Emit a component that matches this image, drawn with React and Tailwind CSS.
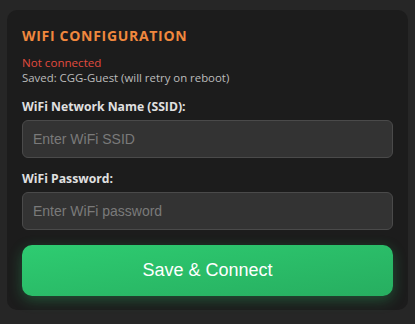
import React, { useState } from 'react';

const Field = ({ label, placeholder, type = 'text', value, onChange }) => (
  <div className="flex flex-col">
    <label className="text-[12.2px] font-bold text-[#e0e0e0] leading-[16px] mb-[5px]">{label}</label>
    <input
      type={type}
      value={value}
      onChange={(e) => onChange(e.target.value)}
      placeholder={placeholder}
      className="h-[38px] w-full rounded-[6px] border border-[#4a4a4a] bg-[#333333] px-[10px] text-[14px] text-[#ddd] placeholder:text-[#7a7a7a] outline-none"
      style={{ fontFamily: '"Liberation Sans", Arial, sans-serif' }}
    />
  </div>
);

const App = () => {
  const [ssid, setSsid] = useState('');
  const [password, setPassword] = useState('');

  return (
    <div
      className="min-h-screen bg-[#262626] pt-[10px] px-[7px] pb-[10px]"
      style={{ fontFamily: '"Open Sans", "Noto Sans", sans-serif' }}
    >
      <div className="rounded-[10px] bg-[#1c1c1c] px-[15px] pt-[17px] pb-[14px]">
        <h2 className="text-[14px] font-bold tracking-[0.7px] text-[#f0883e] leading-[18px]">WIFI CONFIGURATION</h2>
        <div className="mt-[10px] text-[11.6px] leading-[15px]">
          <div className="text-[#e04b3f]">Not connected</div>
          <div className="text-[11.4px] text-[#bdbdbd]">Saved: CGG-Guest (will retry on reboot)</div>
        </div>
        <div className="mt-[14px] flex flex-col gap-[13px]">
          <Field label="WiFi Network Name (SSID):" placeholder="Enter WiFi SSID" value={ssid} onChange={setSsid} />
          <Field label="WiFi Password:" placeholder="Enter WiFi password" type="password" value={password} onChange={setPassword} />
        </div>
        <button
          className="mt-[15px] h-[51px] w-full rounded-[10px] bg-gradient-to-br from-[#2ecc71] to-[#27ae60] text-[18px] text-white shadow-[0_4px_14px_rgba(46,204,113,0.3)]"
          style={{ fontFamily: '"Liberation Sans", Arial, sans-serif' }}
        >
          Save &amp; Connect
        </button>
      </div>
    </div>
  );
};

export default App;
